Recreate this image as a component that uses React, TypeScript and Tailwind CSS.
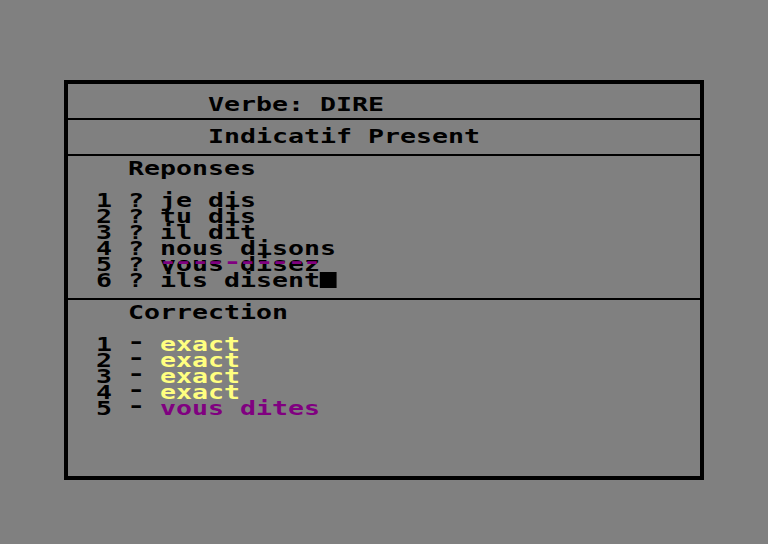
import React from "react";

const FONT = "font-['DejaVu_Sans_Mono',monospace] font-bold text-[19px] leading-[16px]";

function Line({ children }: { children?: React.ReactNode }) {
  return (
    <div className="relative h-4 whitespace-pre">
      <span className="inline-block origin-left scale-x-[1.3987]">{children}</span>
    </div>
  );
}

function Dash() {
  return <span className="relative -top-[3.5px] inline-block scale-x-[1.15]">-</span>;
}

export default function App() {
  const answers = ["je dis", "tu dis", "il dit", "nous disons"];
  return (
    <div className={`w-[768px] h-[544px] bg-[#808080] pt-[80px] pl-[64px] text-black ${FONT}`}>
      <div className="w-[640px] h-[400px] border-4 border-black flex flex-col">
        <div className="h-[34px] pt-[12px] pl-[28px]">
          <Line>{"       Verbe: DIRE"}</Line>
        </div>
        <div className="h-[2px] bg-black" />
        <div className="h-[34px] pt-[8px] pl-[28px]">
          <Line>{"       Indicatif Present"}</Line>
        </div>
        <div className="h-[2px] bg-black" />
        <div className="h-[142px] pt-[4px] pl-[28px] flex flex-col">
          <Line>{"  Reponses"}</Line>
          <div className="h-4" />
          {answers.map((a, i) => (
            <Line key={i}>{`${i + 1} ? ${a}`}</Line>
          ))}
          <div className="relative h-4 whitespace-pre">
            <span className="inline-block origin-left scale-x-[1.3987]">{"5 ? vous disez"}</span>
            <span className="absolute left-[64px] top-0 inline-block origin-left scale-x-[1.3987] text-[#800080]">
              <Dash />
              <Dash />
              <Dash />
              <Dash />
              <Dash />
              <Dash />
              <Dash />
              <Dash />
              <Dash />
              <Dash />
            </span>
          </div>
          <Line>
            {"6 ? ils disent"}
            <span className="inline-block w-[11.439px] h-4 bg-black align-top" />
          </Line>
        </div>
        <div className="h-[2px] bg-black" />
        <div className="flex-1 pt-[4px] pl-[28px] flex flex-col">
          <Line>{"  Correction"}</Line>
          <div className="h-4" />
          {[1, 2, 3, 4].map((n) => (
            <Line key={n}>
              {`${n} `}
              <Dash />
              {" "}
              <span className="text-[#ffff80]">exact</span>
            </Line>
          ))}
          <Line>
            {"5 "}
            <Dash />
            {" "}
            <span className="text-[#800080]">vous dites</span>
          </Line>
        </div>
      </div>
    </div>
  );
}
